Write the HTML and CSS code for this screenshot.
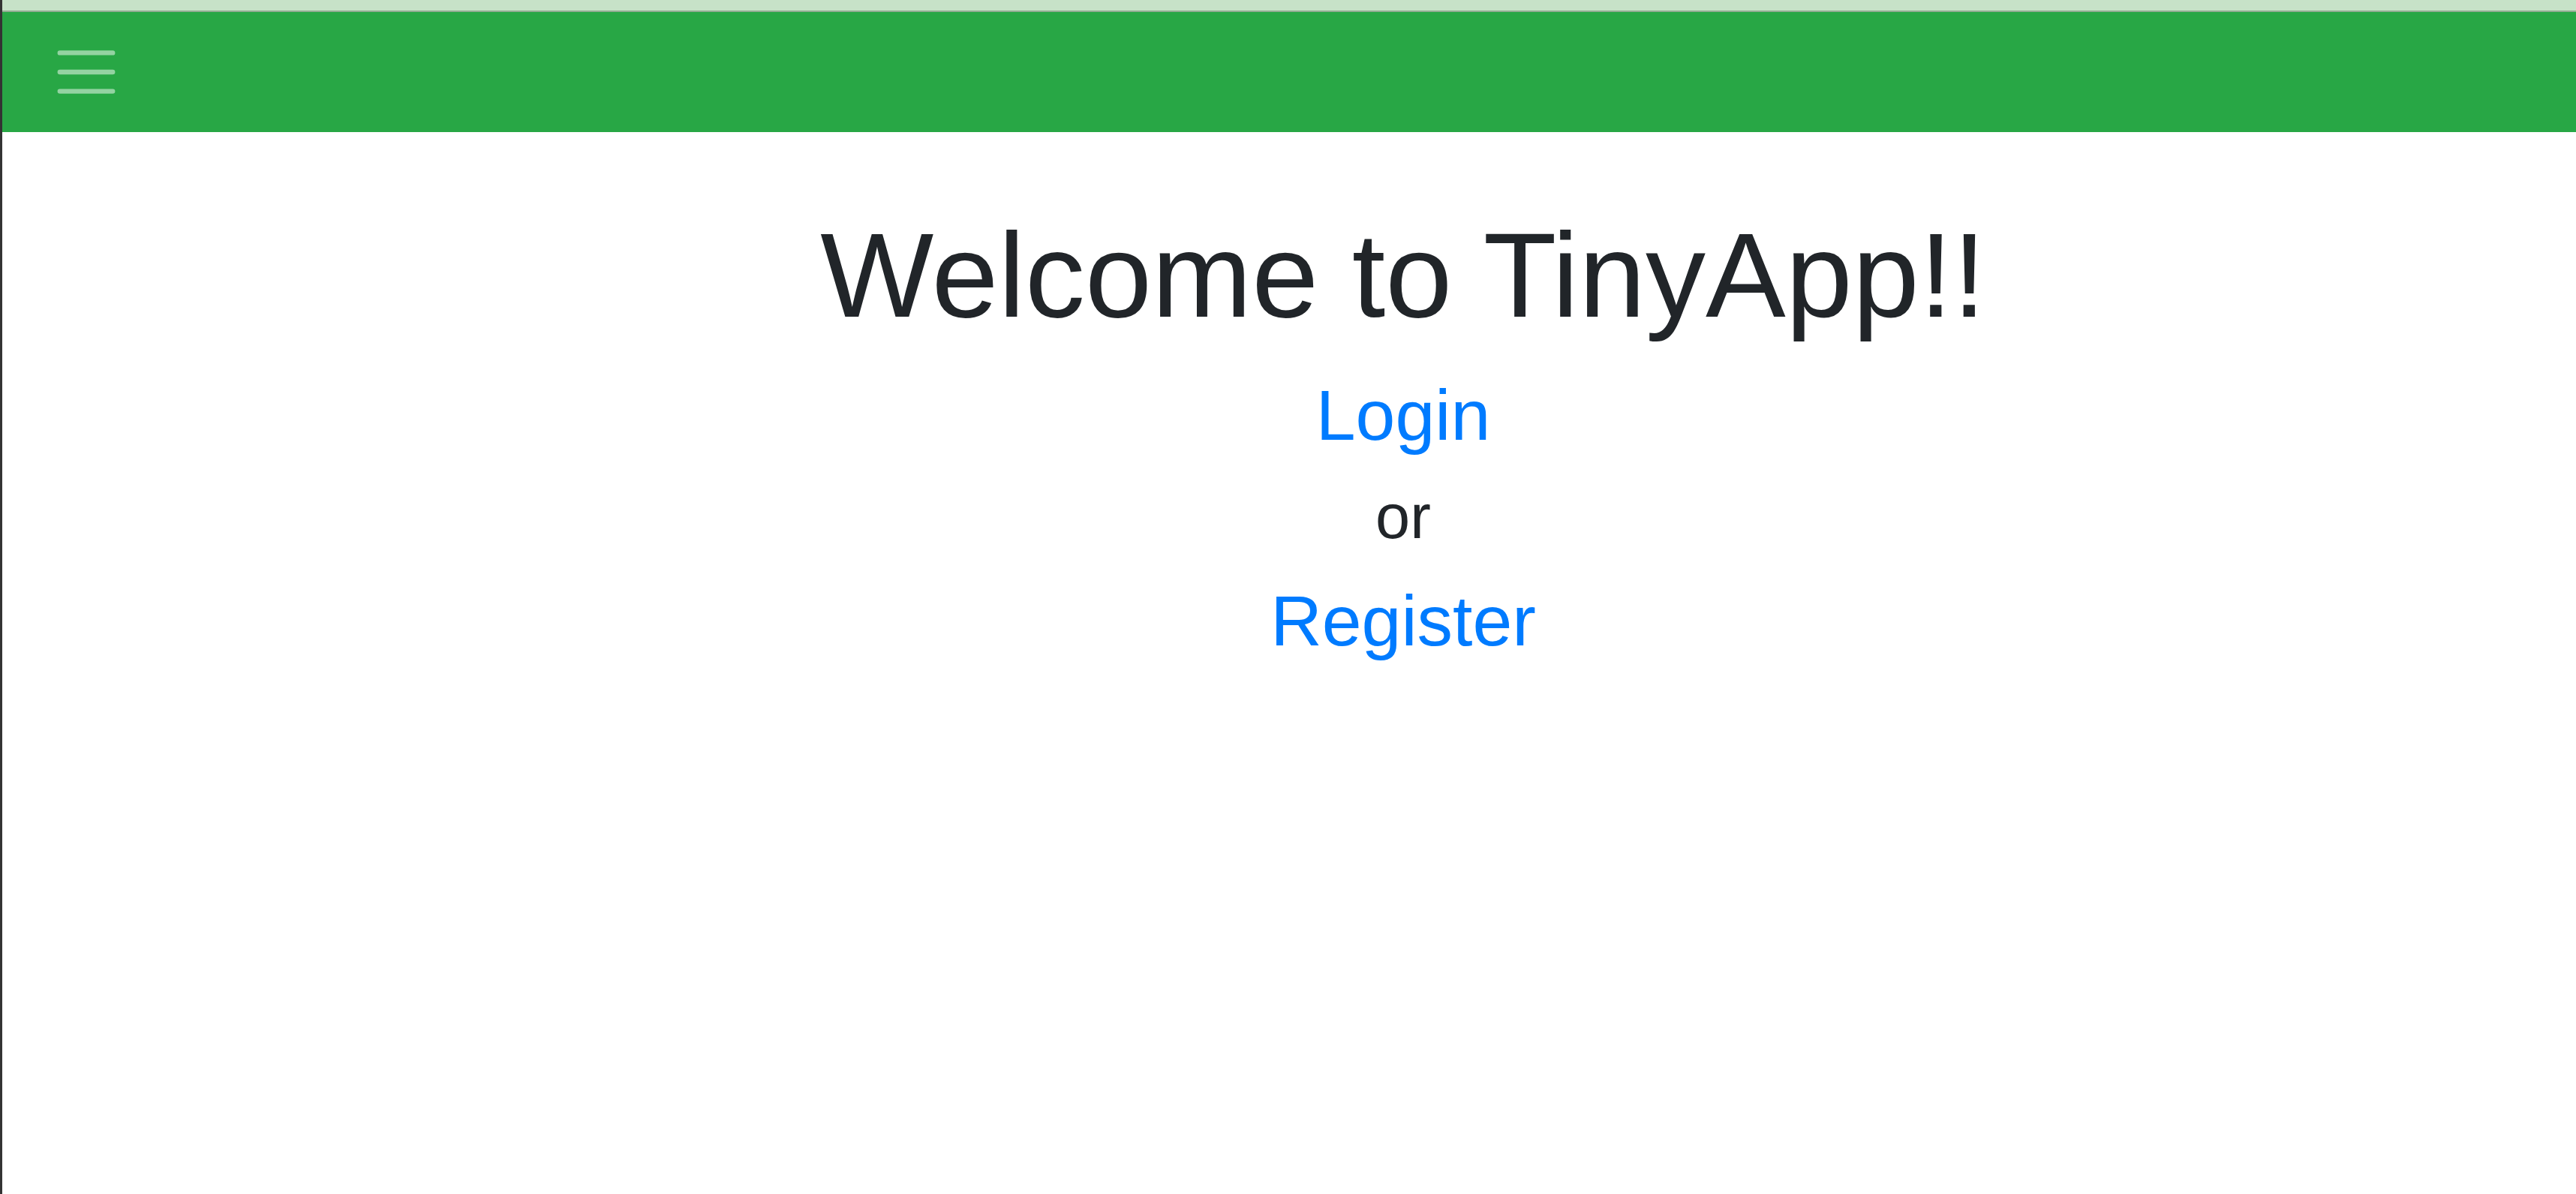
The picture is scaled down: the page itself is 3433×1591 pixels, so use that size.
FILE: index.html
```html
<!DOCTYPE html>
<html lang="en">
<head>
<meta charset="utf-8">
<title>TinyApp</title>
<link rel="stylesheet" href="styles.css">
</head>
<body>
<div class="topstrip"></div>
<nav class="navbar">
  <button class="toggler" aria-label="Toggle navigation">
    <svg class="toggler-icon" width="96" height="96" viewBox="0 0 30 30" xmlns="http://www.w3.org/2000/svg">
      <path stroke="rgba(255,255,255,0.5)" stroke-width="2" stroke-linecap="round" stroke-miterlimit="10" d="M4 7h22M4 15h22M4 23h22"/>
    </svg>
  </button>
</nav>
<main class="main">
  <h1 class="title">Welcome to TinyApp!!</h1>
  <h2 class="link-line"><a href="#" class="link">Login</a></h2>
  <h3 class="or">or</h3>
  <h2 class="link-line"><a href="#" class="link">Register</a></h2>
</main>
</body>
</html>
```

FILE: styles.css
```css
html, body {
  margin: 0;
  padding: 0;
  background: #ffffff;
}
body {
  border-left: 3px solid #333333;
  min-height: 1591px;
  box-sizing: border-box;
  font-family: "Liberation Sans", Arial, Helvetica, sans-serif;
  color: #212529;
}
.topstrip {
  height: 14px;
  background: #c7e2c8;
  border-bottom: 2px solid #93ad93;
}
.navbar {
  height: 160px;
  background: #28a745;
  display: flex;
  align-items: center;
  padding-left: 64px;
}
.toggler {
  border: 0;
  background: transparent;
  padding: 0;
  margin: 0;
  width: 96px;
  height: 96px;
  display: block;
}
.toggler-icon {
  display: block;
}
.main {
  display: flex;
  flex-direction: column;
  align-items: center;
  padding-left: 304px;
  text-align: center;
}
.title {
  font-weight: 400;
  font-size: 160px;
  line-height: 1.2;
  margin: 95px 0 0 0;
}
.link-line {
  font-weight: 400;
  font-size: 95px;
  line-height: 1.2;
  margin: 0;
}
.link-line:first-of-type {
  margin-top: 33px;
}
.or {
  font-weight: 400;
  font-size: 83px;
  line-height: 1.2;
  margin: 29px 0 31px 0;
}
.link {
  color: #007bff;
  text-decoration: none;
}
```
